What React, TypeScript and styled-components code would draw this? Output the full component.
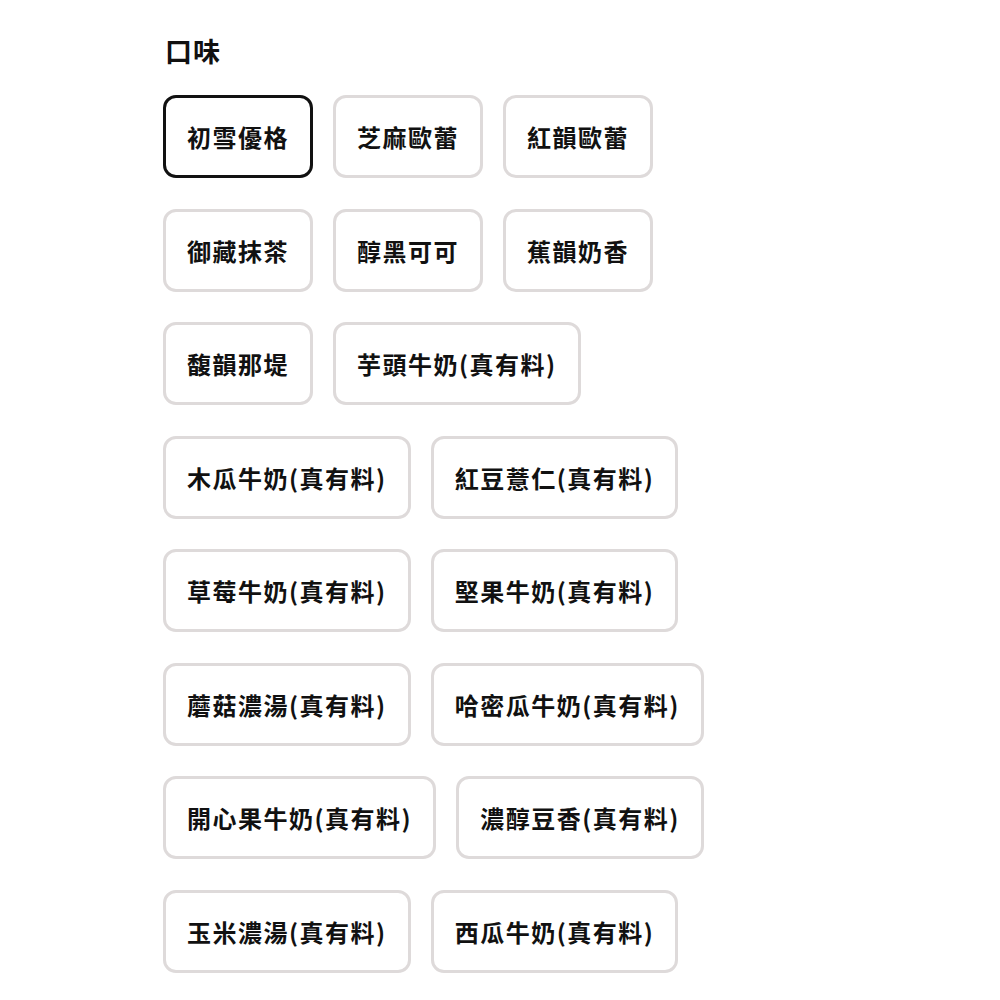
import React, { useState } from "react";
import styled, { createGlobalStyle, css } from "styled-components";

const GlobalStyle = createGlobalStyle`
    body {
        margin: 0;
        background-color: #ffffff;
        font-family: "Noto Sans CJK TC", "Noto Sans", sans-serif;
        color: #111111;
    }
`;

const SSection = styled.section`
    display: flex;
    flex-direction: column;
    row-gap: 27px;
    width: 640px;
    padding: 34px 0 0 163px;
`;

const STitle = styled.h2`
    margin: 0 0 0 2px;
    font-size: 27px;
    font-weight: 700;
    line-height: 34px;
    letter-spacing: 1px;
`;

const SOptions = styled.div`
    display: flex;
    flex-wrap: wrap;
    column-gap: 20px;
    row-gap: 30.5px;
`;

const SOption = styled.button<{ isActive: boolean }>`
    display: flex;
    align-items: center;
    justify-content: center;
    height: 83px;
    padding: 0 21px;
    box-sizing: border-box;
    border: 3px solid #dedada;
    border-radius: 13px;
    background-color: #ffffff;
    font-family: inherit;
    font-size: 24px;
    font-weight: 700;
    letter-spacing: 1.5px;
    color: #111111;
    cursor: pointer;
    white-space: nowrap;

    ${({ isActive }) => isActive && css`
        border-color: #111111;
    `}
`;

const flavours = [
    "初雪優格",
    "芝麻歐蕾",
    "紅韻歐蕾",
    "御藏抹茶",
    "醇黑可可",
    "蕉韻奶香",
    "馥韻那堤",
    "芋頭牛奶(真有料)",
    "木瓜牛奶(真有料)",
    "紅豆薏仁(真有料)",
    "草莓牛奶(真有料)",
    "堅果牛奶(真有料)",
    "蘑菇濃湯(真有料)",
    "哈密瓜牛奶(真有料)",
    "開心果牛奶(真有料)",
    "濃醇豆香(真有料)",
    "玉米濃湯(真有料)",
    "西瓜牛奶(真有料)",
];

export default function App() {

    const [selected, setSelected] = useState(flavours[0]);

    return (
        <>
            <GlobalStyle />
            <SSection>
                <STitle>口味</STitle>
                <SOptions>
                    {flavours.map((name) => (
                        <SOption
                            key={name}
                            type="button"
                            isActive={selected === name}
                            onClick={() => setSelected(name)}
                        >
                            {name}
                        </SOption>
                    ))}
                </SOptions>
            </SSection>
        </>
    )
}
